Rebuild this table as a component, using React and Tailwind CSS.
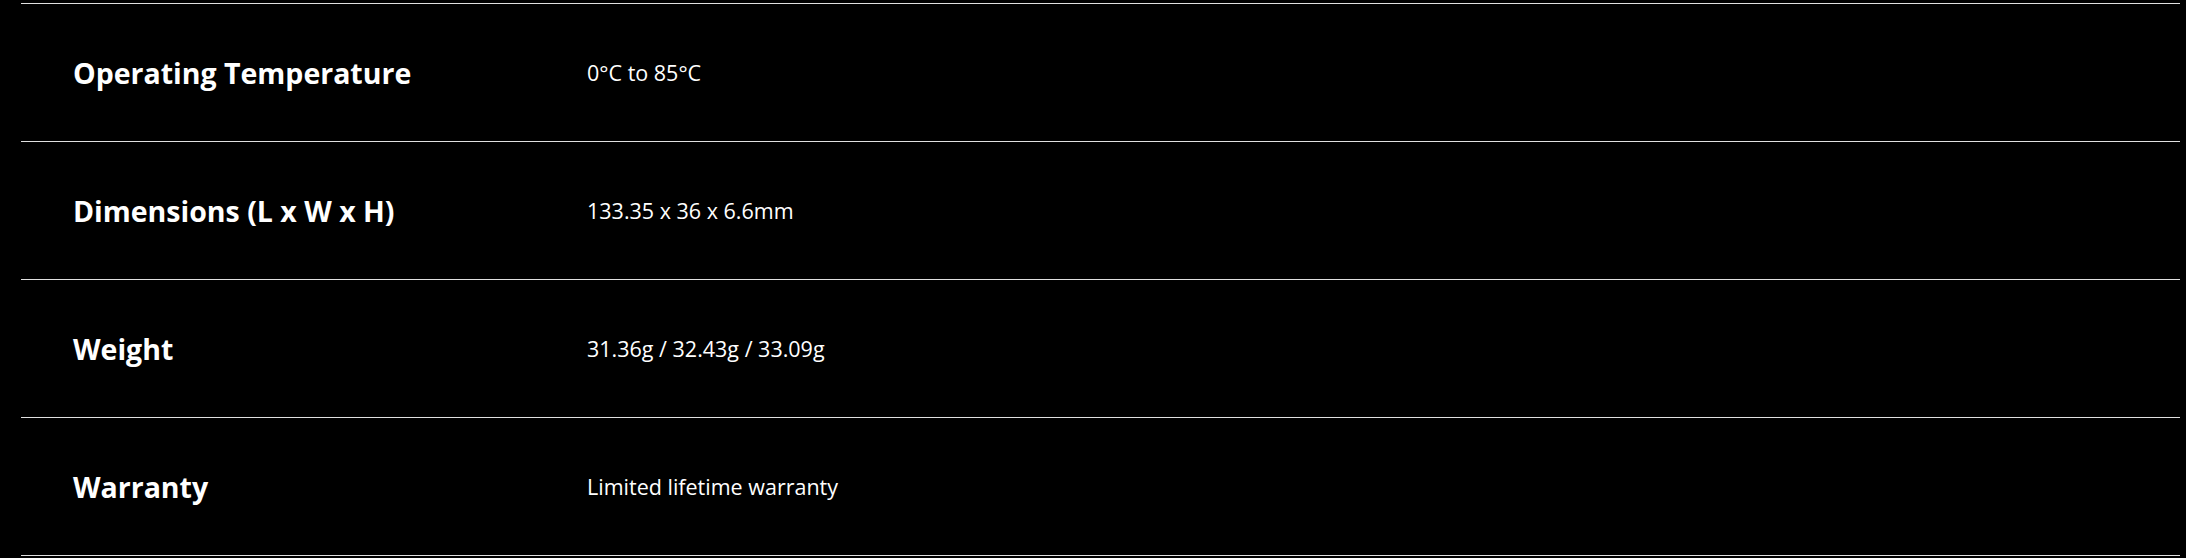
const specs = [
  { label: 'Operating Temperature', value: '0°C to 85°C' },
  { label: 'Dimensions (L x W x H)', value: '133.35 x 36 x 6.6mm' },
  { label: 'Weight', value: '31.36g / 32.43g / 33.09g' },
  { label: 'Warranty', value: 'Limited lifetime warranty' },
];

export default function App() {
  return (
    <div
      className="min-h-[558px] w-full bg-black pt-[3px] pl-[21px] pr-[6px] text-white"
      style={{ fontFamily: '"Open Sans", "Noto Sans", sans-serif' }}
    >
      <div className="border-b border-[#e0e0e0]">
        {specs.map((row) => (
          <div
            key={row.label}
            className="flex h-[138px] items-center border-t border-[#e0e0e0] pl-[52px]"
          >
            <div className="w-[514px] shrink-0 pt-[2px] text-[28.5px] font-bold">
              {row.label}
            </div>
            <div className="pt-[2px] text-[21.5px]">{row.value}</div>
          </div>
        ))}
      </div>
    </div>
  );
}
